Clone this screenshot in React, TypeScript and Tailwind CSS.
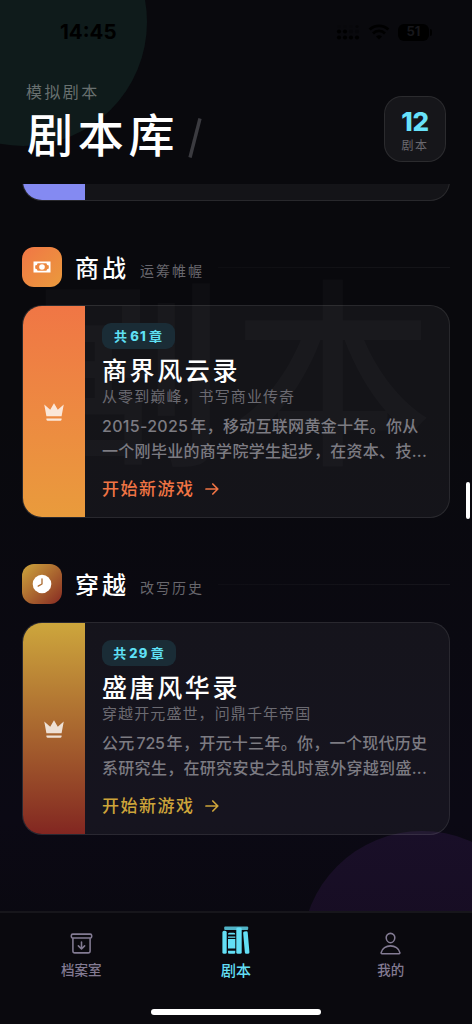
import React from 'react';
import { IoArchiveOutline, IoPersonOutline } from 'react-icons/io5';

type Story = {
  category: string;
  motto: string;
  icon: React.ReactNode;
  iconBg: string;
  stripe: string;
  accent: string;
  badgeWidth: string;
  chapters: number;
  title: string;
  subtitle: string;
  lines: React.ReactNode[];
};

// ── 图标 ──
function CashIcon() {
  return (
    <svg viewBox="0 0 18 12" className="h-3 w-[18px]">
      <path
        fillRule="evenodd"
        fill="currentColor"
        d="M.5.5h17v11H.5ZM4.6 2.2A2.8 2.8 0 0 1 2.2 4.6v2.8a2.8 2.8 0 0 1 2.4 2.4h8.8a2.8 2.8 0 0 1 2.4-2.4V4.6a2.8 2.8 0 0 1-2.4-2.4Z"
      />
      <circle cx="9" cy="6" r="2.8" fill="currentColor" />
    </svg>
  );
}

function ClockIcon() {
  return (
    <svg viewBox="0 0 20 20" className="size-5">
      <circle cx="10" cy="10" r="9.3" fill="currentColor" />
      <path d="M10 4.8V10l-3.8 2.1" fill="none" stroke="#ab6a30" strokeWidth="1.3" strokeLinecap="round" strokeLinejoin="round" />
    </svg>
  );
}

function LibraryIcon() {
  return (
    <svg viewBox="0 0 28 28" className="size-7" fill="currentColor">
      <rect x="2.2" y="0.5" width="24" height="3.4" rx="1" opacity="0.8" />
      <rect x="0.4" y="4.8" width="4.3" height="23" rx="1.6" />
      <path d="M7.8 8.6h5.4a1.6 1.6 0 0 0-1.6-1.9H7.6A1.6 1.6 0 0 0 6 8.6ZM6 10.5h7.3v1.2H6ZM6 13h7.3v9.6H6ZM6 24.7h7.3v1.2a1.6 1.6 0 0 1-1.6 1.9H7.6A1.6 1.6 0 0 1 6 25.9Z" />
      <rect x="14.3" y="1.4" width="5.4" height="26.4" rx="1.6" />
      <rect x="22" y="5.4" width="4.6" height="22.4" rx="1.4" transform="rotate(-5 24.3 16.6)" />
    </svg>
  );
}

function Crown() {
  return (
    <svg viewBox="0 0 24 24" className="size-[26px] fill-white/80">
      <path d="M5 16 3 5l5.5 5L12 4l3.5 6L21 5l-2 11H5m14 3c0 .6-.4 1-1 1H6c-.6 0-1-.4-1-1v-1h14v1Z" />
    </svg>
  );
}

function ArrowIcon() {
  return (
    <svg viewBox="0 0 16 16" className="size-4" fill="none" stroke="currentColor" strokeWidth="1.7" strokeLinecap="round" strokeLinejoin="round">
      <path d="M2 8h11.6M8.8 3l5 5-5 5" />
    </svg>
  );
}

const STORIES: Story[] = [
  {
    category: '商战',
    motto: '运筹帷幄',
    icon: <CashIcon />,
    iconBg: 'bg-linear-to-br from-[#f07645] to-[#ea9a3c]',
    stripe: 'bg-linear-to-b from-[#f07645] to-[#e99b3c]',
    accent: 'text-[#f07444]',
    badgeWidth: 'w-[73px]',
    chapters: 61,
    title: '商界风云录',
    subtitle: '从零到巅峰，书写商业传奇',
    lines: [
      <>
        <span className="mr-[2px]">2015-2025</span>年，移动互联网黄金十年。你从
      </>,
      '一个刚毕业的商学院学生起步，在资本、技...',
    ],
  },
  {
    category: '穿越',
    motto: '改写历史',
    icon: <ClockIcon />,
    iconBg: 'bg-linear-to-br from-[#cda63c] to-[#862822]',
    stripe: 'bg-linear-to-b from-[#cda63c] to-[#822621]',
    accent: 'text-[#cda43a]',
    badgeWidth: 'w-[74px]',
    chapters: 29,
    title: '盛唐风华录',
    subtitle: '穿越开元盛世，问鼎千年帝国',
    lines: [
      <>
        公元<span className="mx-[2px] tracking-[-0.3px]">725</span>年，开元十三年。你，一个现代历史
      </>,
      '系研究生，在研究安史之乱时意外穿越到盛...',
    ],
  },
];

function StatusBar() {
  return (
    <div className="flex h-[62px] items-center justify-between pt-[2px] pr-[43px] pl-[60px] text-black">
      <span className="font-['Inter'] text-[20.5px] font-bold">14:45</span>
      <div className="flex items-center gap-[8px]">
        <svg viewBox="0 0 24 16" className="h-4 w-6">
          {[0, 1, 2, 3].map((i) => (
            <g key={i}>
              <circle cx={3 + i * 6} cy="13.5" r="2.1" />
              <circle cx={3 + i * 6} cy="7.5" r="2.1" opacity={i < 2 ? 1 : 0.3} />
              <circle cx={3 + i * 6} cy="2.5" r="1.6" opacity={i > 2 ? 0.4 : 0.1} />
            </g>
          ))}
        </svg>
        <svg viewBox="0 0 22 16" className="h-4 w-[22px]" fill="none" stroke="currentColor" strokeWidth="2.8">
          <path d="M1.6 5.6a13.6 13.6 0 0 1 18.8 0M5 9.4a8.6 8.6 0 0 1 12 0" />
          <path d="M11 15.6 8 12.6a4.3 4.3 0 0 1 6 0Z" fill="currentColor" stroke="none" />
        </svg>
        <span className="relative flex h-[17px] w-[31px] items-center justify-center rounded-[6px] bg-black font-['Inter'] text-[13px] font-bold text-[#17171b]">
          51
          <span className="absolute top-[5px] -right-[3px] h-[7px] w-[2px] rounded-r bg-black" />
        </span>
      </div>
    </div>
  );
}

function StoryCard({ s }: { s: Story }) {
  return (
    <article className="flex h-[213px] overflow-hidden rounded-[20px] border border-white/9 bg-[#ffffff0c]">
      <div className={`flex w-[62px] shrink-0 items-center justify-center ${s.stripe}`}>
        <Crown />
      </div>
      <div className="flex flex-1 flex-col items-start pt-[17px] pl-[17px] whitespace-nowrap">
        <div className={`flex h-[26px] items-center justify-center rounded-[9px] bg-[#1a2c36] pt-px text-[13px] font-bold tracking-[1.2px] text-[#5fe0f5] ${s.badgeWidth}`}>
          共<span className="mx-[2px] font-['Inter'] font-extrabold">{s.chapters}</span>章
        </div>
        <h3 className="mt-[5px] text-[25px] leading-[34px] font-medium tracking-[2.6px] text-white">{s.title}</h3>
        <p className="-mt-px text-[15px] leading-[19px] tracking-[1.1px] text-[#6b6a71]">{s.subtitle}</p>
        <div className="mt-[8px] text-[16px] leading-[24.5px] font-medium tracking-[0.3px] text-[#7c7b82]">
          {s.lines.map((line, i) => (
            <p key={i}>{line}</p>
          ))}
        </div>
        <div className={`mt-[13px] flex items-center gap-[9px] text-[17px] leading-[26px] font-medium tracking-[1.5px] ${s.accent}`}>
          开始新游戏
          <ArrowIcon />
        </div>
      </div>
    </article>
  );
}

function StorySection({ s }: { s: Story }) {
  return (
    <section>
      <div className="mb-[18px] flex h-[40px] items-center">
        <span className={`flex size-10 items-center justify-center rounded-[12px] text-white ${s.iconBg}`}>{s.icon}</span>
        <h2 className="mt-[3px] ml-[13px] text-[24px] leading-[40px] font-medium tracking-[3px] text-white">{s.category}</h2>
        <span className="mt-[7px] ml-[11px] text-[14px] tracking-[2px] text-[#68676d]">{s.motto}</span>
        <span className="ml-[14px] h-px flex-1 bg-linear-to-r from-white/2 to-white/5" />
      </div>
      <StoryCard s={s} />
    </section>
  );
}

const TABS = [
  { label: '档案室', icon: <IoArchiveOutline className="size-[25px] stroke-current stroke-[12px]" />, active: false },
  { label: '剧本', icon: <LibraryIcon />, active: true },
  { label: '我的', icon: <IoPersonOutline className="size-[25px] stroke-current stroke-[12px]" />, active: false },
];

export default function App() {
  return (
    <div className="relative isolate flex h-[1024px] w-[472px] flex-col overflow-hidden bg-linear-to-b from-[#09090d] from-40% via-[#0b0914] via-80% to-[#09080d] font-['Inter','Noto_Sans_CJK_SC',sans-serif]">
      {/* 背景光斑与水印 */}
      <div className="absolute -top-[102px] -left-[101px] -z-10 size-[248px] rounded-full bg-[#0f1b1b]" />
      <div className="absolute top-[831px] left-[302px] -z-10 size-[240px] rounded-full bg-linear-to-b from-[#190f28] to-[#140a1c]" />
      <div className="absolute top-[256px] left-[25px] -z-10 text-[200px] leading-[240px] font-medium tracking-[8px] whitespace-nowrap text-white/[0.022]">剧本</div>

      <StatusBar />

      <header className="flex h-[122px] items-start justify-between pr-[26px] pl-[26px]">
        <div>
          <p className="mt-[19px] text-[16px] leading-[22px] tracking-[2.4px] text-[#68706f]">模拟剧本</p>
          <h1 className="mt-px ml-px flex text-[46px] leading-[62px] font-medium tracking-[4.8px] text-white">
            剧本库
            <svg viewBox="0 0 14 42" className="mt-[13px] ml-[9px] h-[42px] w-[14px]">
              <path d="M12 1.5 2 40.5" stroke="#3b3b40" strokeWidth="3.4" />
            </svg>
          </h1>
        </div>
        <div className="mt-[34px] flex h-[66px] w-[62px] flex-col items-center rounded-[18px] border border-white/9 bg-[#16161a] pt-[10px]">
          <span className="text-[26px] leading-[30px] font-extrabold tracking-[-0.2px] text-[#68e2fa]">12</span>
          <span className="text-[12px] leading-[17px] tracking-[1.5px] text-[#69686e]">剧本</span>
        </div>
      </header>

      <main className="flex flex-1 flex-col overflow-hidden px-[22px]">
        {/* 上一张卡片的底部 */}
        <div className="flex h-[17px] shrink-0 items-end overflow-hidden">
          <div className="flex h-[60px] w-full shrink-0 overflow-hidden rounded-[20px] border border-white/9 bg-[#ffffff0c]">
            <div className="w-[62px] bg-[#848af2]" />
          </div>
        </div>
        <div className="mt-[46px] flex flex-col gap-[46px]">
          {STORIES.map((s) => (
            <StorySection key={s.category} s={s} />
          ))}
        </div>
      </main>

      <div className="absolute top-[482px] right-[2px] h-[37px] w-[4px] rounded-full bg-white" />

      <nav className="relative flex h-[113px] shrink-0 border-t-2 border-[#17161b] bg-[#0a090e] px-[4px] pt-[13px]">
        {TABS.map((t) => (
          <div key={t.label} className={`flex flex-1 flex-col items-center ${t.active ? 'text-[#63dff5]' : 'text-[#837b93]'}`}>
            <span className={`flex h-[34px] ${t.active ? 'items-start' : 'items-center'}`}>{t.icon}</span>
            <span className={`text-center leading-[18px] font-medium ${t.active ? 'mt-[2px] text-[15px]' : 'mt-px text-[13.5px]'}`}>{t.label}</span>
          </div>
        ))}
        <div className="absolute bottom-[9px] left-[151px] h-[6px] w-[170px] rounded-full bg-white" />
      </nav>
    </div>
  );
}
